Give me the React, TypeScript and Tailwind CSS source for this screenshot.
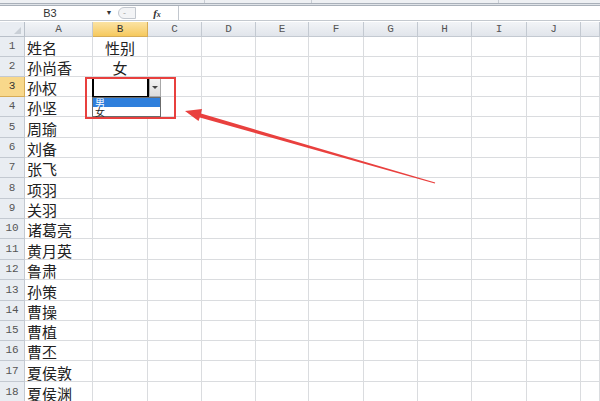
import { Fragment } from 'react'

const COLS = ['A', 'B', 'C', 'D', 'E', 'F', 'G', 'H', 'I', 'J', '']
const WIDTHS = [68, 55, 54, 54, 53, 55, 54, 54, 55, 54, 19]
const ROWS: { h: number; a?: string; b?: string }[] = [
  { h: 20, a: '姓名', b: '性别' },
  { h: 20, a: '孙尚香', b: '女' },
  { h: 20, a: '孙权' },
  { h: 20, a: '孙坚' },
  { h: 21, a: '周瑜' },
  { h: 20, a: '刘备' },
  { h: 20, a: '张飞' },
  { h: 21, a: '项羽' },
  { h: 20, a: '关羽' },
  { h: 20, a: '诸葛亮' },
  { h: 21, a: '黄月英' },
  { h: 20, a: '鲁肃' },
  { h: 21, a: '孙策' },
  { h: 20, a: '曹操' },
  { h: 20, a: '曹植' },
  { h: 20, a: '曹丕' },
  { h: 21, a: '夏侯敦' },
  { h: 21, a: '夏侯渊' },
]

const cjk = { fontFamily: '"Noto Sans CJK SC", "Noto Sans", sans-serif' }
const mono = { fontFamily: '"Liberation Mono", "DejaVu Sans Mono", monospace' }

export default function App() {
  return (
    <div className="relative w-[600px] h-[401px] overflow-hidden bg-white">
      {/* ribbon bottom */}
      <div className="flex h-[3px] bg-[#eef0f3]">
        <div className="w-[205px] border-r border-[#c8cdd4]" />
        <div className="w-[107px] border-r border-[#c8cdd4]" />
        <div className="w-[187px] border-r border-[#c8cdd4]" />
      </div>
      <div className="h-[3px] border-t border-b border-[#a9b0b9] bg-[#dfe3e8]" />

      {/* formula bar */}
      <div className="flex h-[14px] items-center text-[11px] text-[#333]" style={{ fontFamily: '"Liberation Sans", Arial, sans-serif' }}>
        <div className="w-[100px] text-center leading-none">B3</div>
        <div className="w-[18px] flex justify-center text-[7px] text-[#333]">▼</div>
        <div className="w-[18px] h-[12px] rounded-l-full border border-[#c2c7ce] bg-[#f3f4f6] flex items-center pl-[4px] text-[9px] text-[#aaa] leading-none">-</div>
        <div className="w-[42px] text-center italic font-bold text-[11px] leading-none" style={{ fontFamily: '"Liberation Serif", serif' }}>
          f<span className="text-[8px]">x</span>
        </div>
        <div className="h-full border-l border-[#c2c7ce] flex-1" />
      </div>
      <div className="h-[2px] border-t border-[#c4c9cf]" />

      {/* grid */}
      <div className="grid" style={{ gridTemplateColumns: `25px ${WIDTHS.map(w => w + 'px').join(' ')}` }}>
        <div className="h-[15px] bg-[#e9edf2] border-r border-b border-[#b9c0c9] relative">
          <div className="absolute right-[3px] bottom-[2px] w-0 h-0 border-l-[7px] border-l-transparent border-b-[7px] border-b-[#c9cfd6]" />
        </div>
        {COLS.map((c, i) => (
          <div key={i}
            className={`h-[15px] border-r border-b flex items-center justify-center text-[11px] leading-none ${
              c === 'B' ? 'bg-gradient-to-b from-[#fbe3a3] to-[#f6c95c] border-[#d6ac57] text-[#333]' : 'bg-gradient-to-b from-[#f2f4f7] to-[#e1e5eb] border-[#c3c9d1] text-[#555]'
            }`} style={mono}>
            {c}
          </div>
        ))}

        {ROWS.map((r, ri) => (
          <Fragment key={ri}>
            <div className={`border-r border-b flex items-center justify-center text-[11px] ${
              ri === 2 ? 'bg-[#f8d88b] border-[#d6ac57] text-[#333]' : 'bg-[#e9edf2] border-[#c3c9d1] text-[#555]'
            }`} style={{ ...mono, height: r.h }}>
              {ri + 1}
            </div>
            {COLS.map((_, ci) => (
              <div key={ci}
                className={`border-r border-b border-[#dadcdf] flex items-end pb-[1px] text-[15px] leading-none text-[#222] ${ci === 1 ? 'justify-center' : 'pl-[2px]'}`}
                style={{ ...cjk, height: r.h }}>
                {ci === 0 ? r.a : ci === 1 ? r.b : ''}
              </div>
            ))}
          </Fragment>
        ))}
      </div>

      {/* active cell with data validation dropdown */}
      <div className="absolute left-[92px] top-[77px] w-[57px] h-[21px] border-2 border-black" />
      <div className="absolute left-[149px] top-[78px] w-[12px] h-[19px] bg-gradient-to-b from-[#f4f4f4] to-[#dcdcdc] border border-[#a8a8a8] flex items-center justify-center">
        <div className="w-0 h-0 border-l-[3px] border-r-[3px] border-t-[3px] border-l-transparent border-r-transparent border-t-[#444]" />
      </div>
      <div className="absolute left-[92px] top-[97px] w-[69px] h-[20px] border border-[#6b6b6b] bg-white text-[10px] leading-none" style={cjk}>
        <div className="h-[9px] bg-[#2f7fdc] text-white pl-[2px] flex items-center">男</div>
        <div className="h-[9px] text-[#222] pl-[2px] flex items-center">女</div>
      </div>

      {/* red annotation */}
      <div className="absolute left-[85px] top-[77px] w-[91px] h-[42px] border-2 border-[#e8403e]" />
      <svg className="absolute left-0 top-0" width="600" height="401" viewBox="0 0 600 401">
        <polygon
          points="185,111 202,109 201,113.5 435.2,182.6 434.8,183.4 199.8,117.5 198.5,121"
          fill="#e9403e" />
      </svg>
    </div>
  )
}
